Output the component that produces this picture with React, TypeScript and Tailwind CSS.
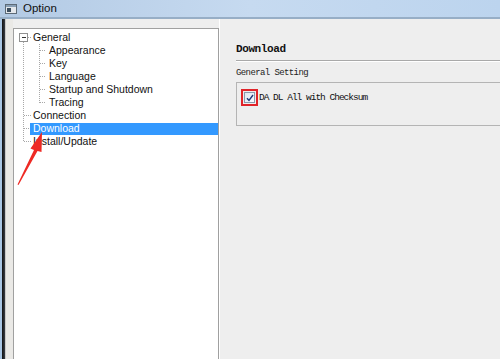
import React from "react";

const TREE: { label: string; depth: number; selected?: boolean }[] = [
  { label: "General", depth: 0 },
  { label: "Appearance", depth: 1 },
  { label: "Key", depth: 1 },
  { label: "Language", depth: 1 },
  { label: "Startup and Shutdown", depth: 1 },
  { label: "Tracing", depth: 1 },
  { label: "Connection", depth: 0 },
  { label: "Download", depth: 0, selected: true },
  { label: "Install/Update", depth: 0 },
];

const ROW = 13;
const TOP = 2;

function TreeLines() {
  // dotted connectors, coordinates relative to the tree panel
  const y = (i: number) => TOP + i * ROW + 6.5;
  return (
    <svg className="absolute inset-0 pointer-events-none" width="205" height="340">
      <g stroke="#a8a8a8" strokeWidth="1" strokeDasharray="1 1" shapeRendering="crispEdges">
        <line x1="9.5" y1={y(0) + 4} x2="9.5" y2={y(8)} />
        <line x1="9.5" y1={y(6)} x2="17" y2={y(6)} />
        <line x1="9.5" y1={y(7)} x2="17" y2={y(7)} />
        <line x1="9.5" y1={y(8)} x2="17" y2={y(8)} />
        <line x1="14" y1={y(0)} x2="17" y2={y(0)} />
        <line x1="25.5" y1={y(0) + 6} x2="25.5" y2={y(5)} />
        {[1, 2, 3, 4, 5].map((i) => (
          <line key={i} x1="25.5" y1={y(i)} x2="32" y2={y(i)} />
        ))}
      </g>
      {/* collapse box */}
      <rect x="5.5" y={y(0) - 4} width="8" height="8" fill="#fff" stroke="#919191" shapeRendering="crispEdges" />
      <line x1="7.5" y1={y(0)} x2="12" y2={y(0)} stroke="#333" shapeRendering="crispEdges" />
    </svg>
  );
}

export default function App() {
  return (
    <div className="relative w-[500px] h-[359px] overflow-hidden bg-[#eeeeee] flex flex-col" style={{ fontFamily: '"Liberation Sans", Arial, sans-serif' }}>
      {/* title bar */}
      <div className="h-[19px] shrink-0 flex items-center gap-[6px] pl-[5px] bg-gradient-to-r from-[#b3cae4] via-[#c6daf0] to-[#bcd4ee] border-b-2 border-[#97aec6]">
        <svg width="12" height="10" viewBox="0 0 12 10">
          <rect x="0.5" y="0.5" width="11" height="9" fill="#e4e8ec" stroke="#5d6b78" />
          <rect x="1" y="1" width="10" height="2" fill="#8aa0b6" />
          <rect x="2" y="4" width="4" height="4" fill="#3d4f60" />
        </svg>
        <span className="text-[11.5px] text-[#111] leading-none">Option</span>
      </div>

      <div className="flex flex-1 min-h-0">
        {/* window frame edge */}
        <div className="w-[2px] bg-[#a9c6e4]" />
        <div className="w-[3px] bg-gradient-to-r from-[#111] to-[#3a3f46]" />
        <div className="w-[8px] bg-[#eae9e6] border-l border-[#c9c9c9]" />

        {/* tree panel */}
        <div className="mt-[9px] w-[206px] shrink-0 bg-white border border-[#a0a0a0] border-b-0 relative text-[10.5px] text-[#111]">
          <TreeLines />
          <div className="relative flex flex-col pt-[2px]">
            {TREE.map((n) => (
              <div key={n.label} className="h-[13px] flex items-center">
                <div className={n.depth === 0 ? "w-[16px]" : "w-[32px]"} />
                <div
                  className={
                    n.selected
                      ? "flex-1 h-[12px] bg-[#3399ff] text-white flex items-center pl-[3px]"
                      : "flex-1 flex items-center pl-[3px]"
                  }
                >
                  <span className="leading-none">{n.label}</span>
                </div>
              </div>
            ))}
          </div>
        </div>
        <div className="w-[1px] bg-white" />

        {/* settings panel */}
        <div className="flex-1 pl-[16px] pt-[25px]" style={{ fontFamily: '"Liberation Mono", "Courier New", monospace' }}>
          <div className="text-[11px] font-bold text-[#111] tracking-[-0.4px] leading-none pb-[5px] border-b border-[#a9a9a9]">
            Download
          </div>
          <div className="h-px bg-white" />
          <div className="mt-[7px] text-[9px] text-[#222] tracking-[-0.6px] leading-none">General Setting</div>
          <div className="mt-[4px] h-[44px] border border-[#b4b4b4] border-r-0 pl-[4px] pt-[6px]">
            <div className="flex items-center">
              <div className="w-[17px] h-[17px] border-2 border-[#e0242a] flex items-center justify-center">
                <div className="w-[11px] h-[11px] border border-[#8a9aae] bg-gradient-to-br from-[#dfe7f1] to-[#f8fbff] flex items-center justify-center">
                  <svg width="8" height="8" viewBox="0 0 8 8">
                    <path d="M1 4.2 L3 6.5 L7 1" fill="none" stroke="#1d3a7a" strokeWidth="1.4" />
                  </svg>
                </div>
              </div>
              <span className="ml-[1px] text-[9.5px] text-[#111] tracking-[-1px] leading-none">DA DL All with Checksum</span>
            </div>
          </div>
        </div>
      </div>

      {/* annotation arrow */}
      <svg className="absolute left-0 top-0 pointer-events-none" width="500" height="359">
        <path d="M17.5 184.5 L34 150 L30.5 148.5 L42 132 L41.5 152 L37.5 151 L18.5 185 Z" fill="#ee2a24" />
      </svg>
    </div>
  );
}
